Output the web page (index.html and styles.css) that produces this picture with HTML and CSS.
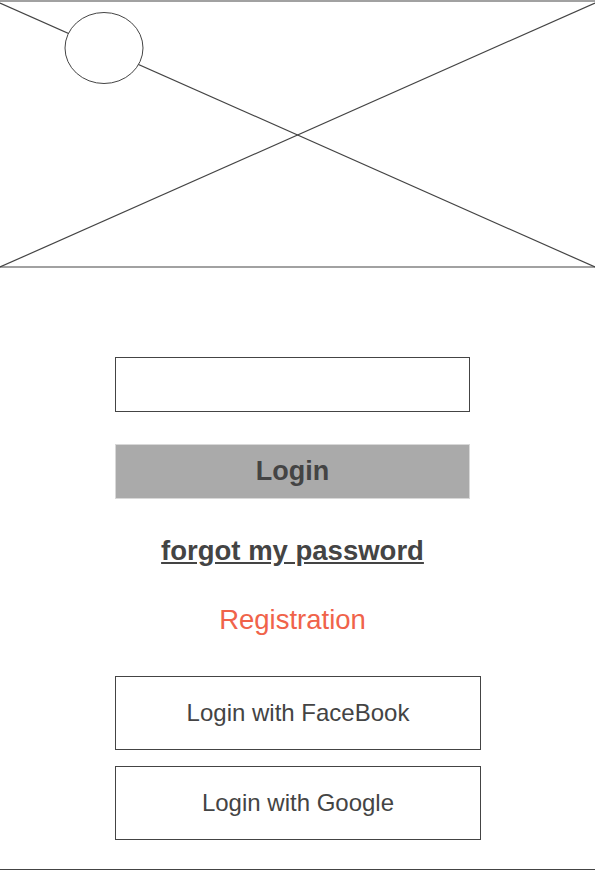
FILE: index.html
```html
<!DOCTYPE html>
<html>
<head>
<meta charset="utf-8">
<link rel="stylesheet" href="styles.css">
</head>
<body>
<div class="hero">
  <svg width="595" height="268" viewBox="0 0 595 268">
    <line x1="0" y1="1" x2="595" y2="1" stroke="#444" stroke-width="1.2"/>
    <line x1="0" y1="267" x2="595" y2="267" stroke="#444" stroke-width="1.2"/>
    <line x1="0" y1="3" x2="595" y2="267" stroke="#444" stroke-width="1.2"/>
    <line x1="0" y1="267" x2="595" y2="3" stroke="#444" stroke-width="1.2"/>
    <ellipse cx="104" cy="48" rx="39" ry="35.5" fill="#fff" stroke="#444" stroke-width="1"/>
  </svg>
</div>
<div class="form">
  <div class="input"></div>
  <div class="login-btn">Login</div>
  <div class="forgot">forgot my password</div>
  <div class="register">Registration</div>
  <div class="social">Login with FaceBook</div>
  <div class="social google">Login with Google</div>
</div>
<div class="bottom-line"></div>
</body>
</html>
```
FILE: styles.css
```css
html, body {
  margin: 0;
  padding: 0;
  background: #fff;
}
body {
  font-family: "Liberation Sans", Arial, sans-serif;
  color: #444;
}
.hero svg {
  display: block;
}
.form {
  display: flex;
  flex-direction: column;
  align-items: flex-start;
  padding-left: 115px;
}
.input {
  width: 353px;
  height: 53px;
  border: 1px solid #444;
  margin-top: 89px;
}
.login-btn {
  width: 353px;
  height: 53px;
  margin-top: 32px;
  background: #aaaaaa;
  border: 1px solid #d8d8d8;
  display: flex;
  align-items: center;
  justify-content: center;
  font-weight: bold;
  font-size: 27px;
  color: #444;
}
.forgot {
  width: 355px;
  text-align: center;
  margin-top: 32px;
  line-height: 40px;
  font-size: 27.5px;
  font-weight: bold;
  text-decoration: underline;
  text-underline-offset: 2px;
}
.register {
  width: 355px;
  text-align: center;
  margin-top: 29px;
  line-height: 40px;
  font-size: 27.5px;
  color: #f0634a;
}
.social {
  width: 364px;
  height: 72px;
  border: 1px solid #444;
  display: flex;
  align-items: center;
  justify-content: center;
  font-size: 24px;
  color: #444;
  margin-top: 36px;
}
.social.google {
  margin-top: 16px;
}
.bottom-line {
  margin-top: 29px;
  height: 0;
  border-top: 1px solid #444;
}
```
